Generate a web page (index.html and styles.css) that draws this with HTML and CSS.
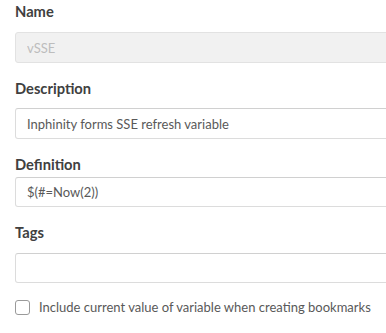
FILE: index.html
```html
<!DOCTYPE html>
<html lang="en">
<head>
    <meta charset="UTF-8">
    <meta name="viewport" content="width=device-width, initial-scale=1.0">
    <title>Edit variable</title>
    <link rel="stylesheet" href="styles.css">
</head>
<body>
    <form class="varForm">
        <div class="field">
            <label class="fieldLabel">Name</label>
            <input class="textInput disabled" type="text" value="vSSE" disabled>
        </div>

        <div class="field">
            <label class="fieldLabel desc">Description</label>
            <input class="textInput" type="text" value="Inphinity forms SSE refresh variable">
        </div>

        <div class="field">
            <label class="fieldLabel tight">Definition</label>
            <input class="textInput short" type="text" value="$(#=Now(2))">
        </div>

        <div class="field">
            <label class="fieldLabel">Tags</label>
            <input class="textInput short" type="text" value="">
        </div>

        <label class="checkRow">
            <span class="checkBox"></span>
            <span class="checkText">Include current value of variable when creating bookmarks</span>
        </label>
    </form>
</body>
</html>
```

FILE: styles.css
```css
html, body {
    margin: 0;
    overflow: hidden;
    background: #fff;
}

body {
    font-family: Lato, "Open Sans", sans-serif;
    color: #404040;
}

.varForm {
    padding: 2px 0 0 15px;
}

.field {
    display: flex;
    flex-direction: column;
    margin-bottom: 16px;
}

.fieldLabel {
    font-size: 14.7px;
    font-weight: bold;
    line-height: 18px;
    color: #404040;
    margin-bottom: 12px;
}

.fieldLabel.desc {
    margin-bottom: 11px;
}

.fieldLabel.tight {
    margin-bottom: 4px;
}

/* right border falls just past the window edge, as in the dialog */
.textInput {
    box-sizing: border-box;
    width: 374px;
    height: 31px;
    margin: 0;
    padding: 0 11px;
    border: 1px solid #dcdcdc;
    border-top-color: #d0d0d0;
    border-radius: 3px;
    background: #fff;
    font-family: Lato, "Open Sans", sans-serif;
    font-size: 13px;
    color: #595959;
    outline: none;
}

.textInput.short {
    height: 30px;
}

.textInput.disabled {
    background: #f1f1f1;
    border-color: #e2e2e2;
    color: #bdbdbd;
}

.checkRow {
    display: flex;
    align-items: center;
    gap: 9px;
    margin-top: 8px;
}

.checkBox {
    box-sizing: border-box;
    width: 15px;
    height: 15px;
    border: 1px solid #9a9a9a;
    border-radius: 3px;
    background: #fff;
}

.checkText {
    font-size: 13px;
    color: #595959;
}
```
